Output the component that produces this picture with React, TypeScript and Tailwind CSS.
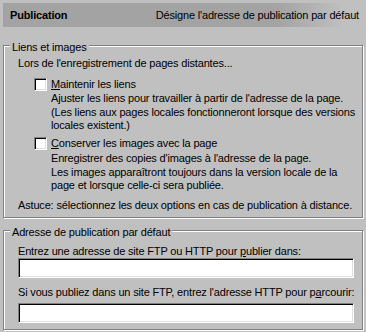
import React from "react";

function Check({ children }: { children: React.ReactNode }) {
  return (
    <div className="flex items-start">
      <div className="mt-0 ml-[16px] w-[13px] h-[13px] shrink-0 bg-white border border-t-[#808080] border-l-[#808080] border-b-white border-r-white shadow-[inset_1px_1px_0_#000,inset_-1px_-1px_0_#dfdfdf]" />
      <div className="ml-[4px] whitespace-nowrap">{children}</div>
    </div>
  );
}

function TextBox() {
  return (
    <div className="w-[336px] h-[20px] bg-white border border-t-[#808080] border-l-[#808080] border-b-white border-r-white shadow-[inset_1px_1px_0_#000,inset_-1px_-1px_0_#dfdfdf]" />
  );
}

export default function App() {
  return (
    <div className="w-[366px] h-[332px] overflow-hidden bg-[#c0c0c0] pt-[3px] px-[3px] font-['Liberation_Sans',Arial,sans-serif] text-[11px] leading-[13px] tracking-[-0.17px] text-black">
      <div className="h-[24px] w-[360px] flex items-center justify-between pl-[7px] pr-[4px] bg-[linear-gradient(to_right,#a3a3a3_0%,#a3a3a3_76%,#c0c0c0_95%)]">
        <span className="font-bold">Publication</span>
        <span>Désigne l'adresse de publication par défaut</span>
      </div>

      <div className="relative mt-[18px] w-[360px] h-[173px] border border-[#808080] shadow-[inset_1px_1px_0_#fff,1px_1px_0_#fff]">
        <div className="absolute left-[6px] top-[-5px] px-[2px] bg-[#c0c0c0] whitespace-nowrap">Liens et images</div>
        <div className="pt-[11px] pl-[14px]">
          <div className="whitespace-nowrap">Lors de l'enregistrement de pages distantes...</div>
          <div className="mt-[8px]">
            <Check>
              <span className="underline">M</span>aintenir les liens
            </Check>
            <div className="mt-[1px] pl-[33px] leading-[13.5px] whitespace-nowrap">
              <div>Ajuster les liens pour travailler à partir de l'adresse de la page.</div>
              <div>(Les liens aux pages locales fonctionneront lorsque des versions</div>
              <div>locales existent.)</div>
            </div>
          </div>
          <div className="mt-[4.5px]">
            <Check>
              <span className="underline">C</span>onserver les images avec la page
            </Check>
            <div className="mt-[2px] pl-[33px] leading-[13.5px] whitespace-nowrap">
              <div>Enregistrer des copies d'images à l'adresse de la page.</div>
              <div>Les images apparaîtront toujours dans la version locale de la</div>
              <div>page et lorsque celle-ci sera publiée.</div>
            </div>
          </div>
          <div className="mt-[6.5px] whitespace-nowrap">
            Astuce: sélectionnez les deux options en cas de publication à distance.
          </div>
        </div>
      </div>

      <div className="relative mt-[12px] w-[360px] h-[100px] border border-[#808080] shadow-[inset_1px_1px_0_#fff,1px_1px_0_#fff]">
        <div className="absolute left-[6px] top-[-5px] px-[2px] bg-[#c0c0c0] whitespace-nowrap">Adresse de publication par défaut</div>
        <div className="pt-[13.5px] pl-[14px]">
          <div className="whitespace-nowrap">
            Entrez une adresse de site FTP ou HTTP pour <span className="underline">p</span>ublier dans:
          </div>
          <div className="mt-[0.5px]">
            <TextBox />
          </div>
          <div className="mt-[8px] whitespace-nowrap">
            Si vous publiez dans un site FTP, entrez l'adresse HTTP pour p<span className="underline">a</span>rcourir:
          </div>
          <div className="mt-[4px]">
            <TextBox />
          </div>
        </div>
      </div>
    </div>
  );
}
